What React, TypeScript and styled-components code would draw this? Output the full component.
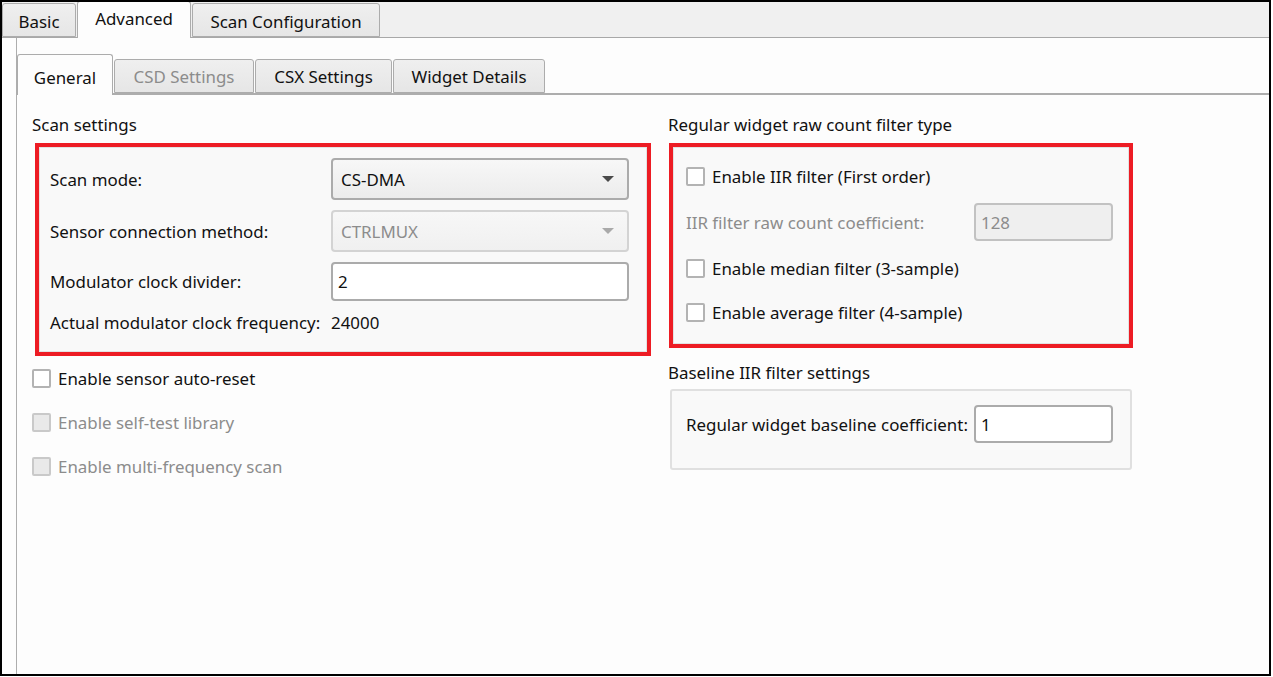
import React from "react";
import styled, { createGlobalStyle, css } from "styled-components";

const GlobalStyle = createGlobalStyle`
  html, body { margin: 0; padding: 0; background: #ffffff; }
  body {
    font-family: "Noto Sans", "Open Sans", sans-serif;
    font-size: 16.9px;
    color: #111;
  }
  * { box-sizing: border-box; }
`;

const Frame = styled.div`
  width: 1271px;
  height: 676px;
  border: 2px solid #000;
  background: #fdfdfd;
  display: flex;
  flex-direction: column;
  overflow: hidden;
`;

const OuterStrip = styled.div`
  display: flex;
  align-items: flex-end;
  gap: 1px;
  height: 36px;
  flex-shrink: 0;
  background: #f0f0f0;
  border-bottom: 1px solid #a8a8a8;
`;

const tabBase = css<{ $selected?: boolean; $w: number; $disabled?: boolean }>`
  width: ${(p) => p.$w}px;
  display: flex;
  align-items: center;
  justify-content: center;
  border: 1px solid #acacac;
  border-radius: 3px 3px 0 0;
  white-space: nowrap;
  color: ${(p) => (p.$disabled ? "#8c8c8c" : "#111")};
  background: ${(p) => (p.$selected ? "#fdfdfd" : "linear-gradient(#efefef, #e6e6e6)")};
`;

const OuterTab = styled.div<{ $selected?: boolean; $w: number; $disabled?: boolean }>`
  ${tabBase};
  height: ${(p) => (p.$selected ? 37 : 34)}px;
  margin-bottom: ${(p) => (p.$selected ? -1 : 0)}px;
  border-bottom: ${(p) => (p.$selected ? "none" : "1px solid #acacac")};
  padding: ${(p) => (p.$selected ? "0 0 3px 0" : "3px 0 0 0")};
`;

const Body = styled.div`
  flex: 1;
  display: flex;
  padding-left: 14px;
`;

const InnerPanel = styled.div`
  flex: 1;
  display: flex;
  flex-direction: column;
  border-left: 1px solid #adadad;
  padding-top: 16px;
`;

const InnerStrip = styled.div`
  display: flex;
  align-items: flex-end;
  gap: 1px;
  height: 41px;
  flex-shrink: 0;
  border-bottom: 2px solid #adadad;
`;

const InnerTab = styled.div<{ $selected?: boolean; $w: number; $disabled?: boolean }>`
  ${tabBase};
  height: ${(p) => (p.$selected ? 41 : 34)}px;
  margin-bottom: ${(p) => (p.$selected ? -2 : 0)}px;
  border-bottom: ${(p) => (p.$selected ? "none" : "1px solid #acacac")};
  padding: ${(p) => (p.$selected ? "4px 0 0 0" : "0")};
`;

const Content = styled.div`
  display: grid;
  grid-template-columns: 620px 465px;
  column-gap: 16px;
  align-items: start;
  padding: 19px 0 0 15px;
`;

const Column = styled.div`
  display: flex;
  flex-direction: column;
`;

const SectionTitle = styled.div<{ $mt?: number; $mb?: number }>`
  height: 22px;
  line-height: 22px;
  margin-top: ${(p) => p.$mt ?? 0}px;
  margin-bottom: ${(p) => p.$mb ?? 7}px;
  white-space: nowrap;
`;

const HighlightBox = styled.div<{ $ml: number; $mr: number }>`
  border: 4px solid #ed1c24;
  margin-left: ${(p) => p.$ml}px;
  margin-right: ${(p) => p.$mr}px;
`;

const GroupInner = styled.div<{ $pad: string }>`
  border: 1px solid #e2e2e2;
  background: #f9f9f9;
  padding: ${(p) => p.$pad};
`;

const FormGrid = styled.div`
  display: grid;
  grid-template-columns: 281px 298px;
  row-gap: 10px;
  align-items: center;
`;

const Label = styled.div<{ $disabled?: boolean }>`
  white-space: nowrap;
  color: ${(p) => (p.$disabled ? "#8c8c8c" : "#111")};
`;

const ValueText = styled.div`
  height: 22px;
  line-height: 22px;
`;

const Select = styled.div<{ $disabled?: boolean }>`
  height: 42px;
  display: flex;
  align-items: center;
  justify-content: space-between;
  padding: 0 13px 0 8px;
  border: 2px solid ${(p) => (p.$disabled ? "#d3d3d3" : "#ababab")};
  border-radius: 4px;
  background: ${(p) =>
    p.$disabled ? "linear-gradient(#f7f7f7, #f0f0f0)" : "linear-gradient(#f7f7f7, #ececec)"};
  color: ${(p) => (p.$disabled ? "#8c8c8c" : "#111")};
`;

const Caret = styled.span<{ $disabled?: boolean }>`
  width: 0;
  height: 0;
  border-left: 6px solid transparent;
  border-right: 6px solid transparent;
  border-top: 6px solid ${(p) => (p.$disabled ? "#a9a9a9" : "#4a4a4a")};
`;

const TextInput = styled.input<{ $h: number }>`
  height: ${(p) => p.$h}px;
  width: 100%;
  padding: 0 5px;
  font: inherit;
  color: #111;
  border: 2px solid #ababab;
  border-radius: 4px;
  background: #fff;
  outline: none;
  &:disabled {
    background: #efefef;
    border-color: #c2c2c2;
    color: #8c8c8c;
  }
`;

const CheckRow = styled.label<{ $disabled?: boolean }>`
  height: 44px;
  display: flex;
  align-items: center;
  gap: 7px;
  white-space: nowrap;
  color: ${(p) => (p.$disabled ? "#8c8c8c" : "#111")};
`;

const Box = styled.span<{ $disabled?: boolean }>`
  width: 19px;
  height: 19px;
  flex-shrink: 0;
  border: 2px solid ${(p) => (p.$disabled ? "#c9c9c9" : "#b3b3b3")};
  border-radius: 2px;
  background: ${(p) => (p.$disabled ? "#e9e9e9" : "#ffffff")};
`;

const FieldRow = styled.div<{ $h: number }>`
  height: ${(p) => p.$h}px;
  display: grid;
  grid-template-columns: 288px 139px;
  align-items: center;
`;

const GroupBox = styled.div`
  margin-left: 2px;
  width: 462px;
  border: 2px solid #e0e0e0;
  border-radius: 3px;
  background: #f9f9f9;
  padding: 14px 14px 25px 14px;
`;

const Check = ({ label, disabled }: { label: string; disabled?: boolean }) => (
  <CheckRow $disabled={disabled}>
    <Box $disabled={disabled} />
    {label}
  </CheckRow>
);

export default function App() {
  return (
    <>
      <GlobalStyle />
      <Frame>
        <OuterStrip>
          <OuterTab $w={74}>Basic</OuterTab>
          <OuterTab $w={114} $selected>Advanced</OuterTab>
          <OuterTab $w={188}>Scan Configuration</OuterTab>
        </OuterStrip>
        <Body>
          <InnerPanel>
            <InnerStrip>
              <InnerTab $w={96} $selected>General</InnerTab>
              <InnerTab $w={140} $disabled>CSD Settings</InnerTab>
              <InnerTab $w={137}>CSX Settings</InnerTab>
              <InnerTab $w={152}>Widget Details</InnerTab>
            </InnerStrip>
            <Content>
              <Column>
                <SectionTitle>Scan settings</SectionTitle>
                <HighlightBox $ml={3} $mr={1}>
                  <GroupInner $pad="10px 18px 17px 10px">
                    <FormGrid>
                      <Label>Scan mode:</Label>
                      <Select>
                        CS-DMA
                        <Caret />
                      </Select>
                      <Label>Sensor connection method:</Label>
                      <Select $disabled>
                        CTRLMUX
                        <Caret $disabled />
                      </Select>
                      <Label>Modulator clock divider:</Label>
                      <TextInput $h={39} defaultValue="2" />
                      <Label>Actual modulator clock frequency:</Label>
                      <ValueText>24000</ValueText>
                    </FormGrid>
                  </GroupInner>
                </HighlightBox>
                <Check label="Enable sensor auto-reset" />
                <Check label="Enable self-test library" disabled />
                <Check label="Enable multi-frequency scan" disabled />
              </Column>
              <Column>
                <SectionTitle>Regular widget raw count filter type</SectionTitle>
                <HighlightBox $ml={1} $mr={0}>
                  <GroupInner $pad="6px 12px 9px 12px">
                    <Check label="Enable IIR filter (First order)" />
                    <FieldRow $h={48}>
                      <Label $disabled>IIR filter raw count coefficient:</Label>
                      <TextInput $h={38} defaultValue="128" disabled />
                    </FieldRow>
                    <Check label="Enable median filter (3-sample)" />
                    <Check label="Enable average filter (4-sample)" />
                  </GroupInner>
                </HighlightBox>
                <SectionTitle $mt={14} $mb={5}>Baseline IIR filter settings</SectionTitle>
                <GroupBox>
                  <FieldRow $h={38}>
                    <Label>Regular widget baseline coefficient:</Label>
                    <TextInput $h={38} defaultValue="1" />
                  </FieldRow>
                </GroupBox>
              </Column>
            </Content>
          </InnerPanel>
        </Body>
      </Frame>
    </>
  );
}
